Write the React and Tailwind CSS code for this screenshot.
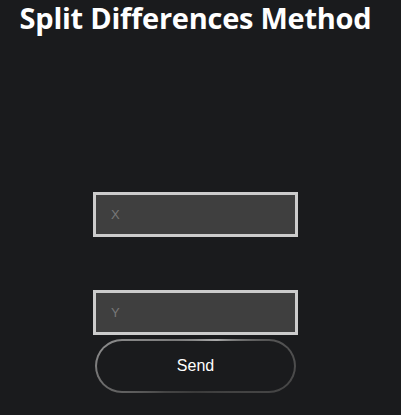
export default function App() {
  return (
    <div className="min-h-[415px] w-full bg-[#1a1b1d] flex flex-col items-center pr-[10px] font-['Liberation_Sans',Arial,sans-serif]">
      <h1 className="text-[29px] leading-[36px] font-bold text-white font-['Open_Sans',sans-serif] tracking-[-0.25px]">
        Split Differences Method
      </h1>
      <input
        placeholder="X"
        className="mt-[156px] w-[205px] h-[45px] bg-[#3f3f3f] border-[3px] border-[#cccccc] pl-[15px] text-[13px] text-white placeholder:text-[#777777] outline-none"
      />
      <input
        placeholder="Y"
        className="mt-[53px] w-[205px] h-[45px] bg-[#3f3f3f] border-[3px] border-[#cccccc] pl-[15px] text-[13px] text-white placeholder:text-[#777777] outline-none"
      />
      <button className="mt-[4px] w-[201px] h-[54px] rounded-full border-2 border-transparent text-white text-[16px] [background:linear-gradient(#1a1b1d,#1a1b1d)_padding-box,conic-gradient(from_0deg,#8a8a8a_0deg,#aaa_40deg,#555_70deg,#444_110deg,#3a3a3a_180deg,#444_230deg,#8a8a8a_280deg,#7a7a7a_320deg,#8a8a8a_360deg)_border-box]">
        Send
      </button>
    </div>
  );
}
